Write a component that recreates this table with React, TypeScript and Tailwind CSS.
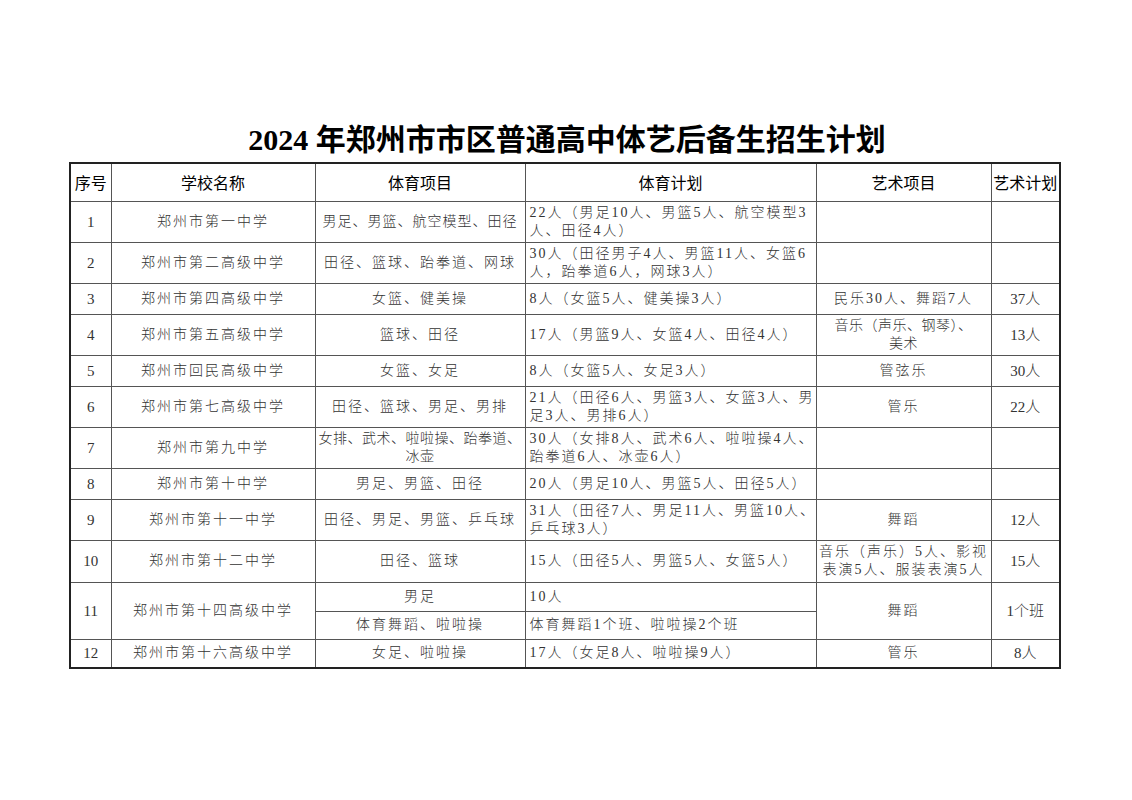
import type { ReactNode } from 'react'

type Row = {
  no: string
  school: string
  sport: ReactNode
  plan: ReactNode
  art?: ReactNode
  artPlan?: string
  h: string
  sportCls?: string
  artCls?: string
}

const rows: Row[] = [
  {
    no: '1',
    school: '郑州市第一中学',
    sport: '男足、男篮、航空模型、田径',
    sportCls: 'tracking-[1px]',
    plan: <>22人（男足10人、男篮5人、航空模型3<br />人、田径4人）</>,
    h: 'h-[41px]',
  },
  {
    no: '2',
    school: '郑州市第二高级中学',
    sport: '田径、篮球、跆拳道、网球',
    plan: <>30人（田径男子4人、男篮11人、女篮6<br />人，跆拳道6人，网球3人）</>,
    h: 'h-[41px]',
  },
  {
    no: '3',
    school: '郑州市第四高级中学',
    sport: '女篮、健美操',
    plan: '8人（女篮5人、健美操3人）',
    art: '民乐30人、舞蹈7人',
    artPlan: '37人',
    h: 'h-[31px]',
  },
  {
    no: '4',
    school: '郑州市第五高级中学',
    sport: '篮球、田径',
    plan: '17人（男篮9人、女篮4人、田径4人）',
    art: <>音乐（声乐、钢琴）、<br />美术</>,
    artCls: 'tracking-[0.5px]',
    artPlan: '13人',
    h: 'h-[41px]',
  },
  {
    no: '5',
    school: '郑州市回民高级中学',
    sport: '女篮、女足',
    plan: '8人（女篮5人、女足3人）',
    art: '管弦乐',
    artPlan: '30人',
    h: 'h-[31px]',
  },
  {
    no: '6',
    school: '郑州市第七高级中学',
    sport: '田径、篮球、男足、男排',
    plan: <>21人（田径6人、男篮3人、女篮3人、男<br />足3人、男排6人）</>,
    art: '管乐',
    artPlan: '22人',
    h: 'h-[41px]',
  },
  {
    no: '7',
    school: '郑州市第九中学',
    sport: <>女排、武术、啦啦操、跆拳道、<br />冰壶</>,
    sportCls: 'tracking-[0.5px]',
    plan: <>30人（女排8人、武术6人、啦啦操4人、<br />跆拳道6人、冰壶6人）</>,
    h: 'h-[41px]',
  },
  {
    no: '8',
    school: '郑州市第十中学',
    sport: '男足、男篮、田径',
    plan: '20人（男足10人、男篮5人、田径5人）',
    h: 'h-[31px]',
  },
  {
    no: '9',
    school: '郑州市第十一中学',
    sport: '田径、男足、男篮、乒乓球',
    plan: <>31人（田径7人、男足11人、男篮10人、<br />乒乓球3人）</>,
    art: '舞蹈',
    artPlan: '12人',
    h: 'h-[41px]',
  },
  {
    no: '10',
    school: '郑州市第十二中学',
    sport: '田径、篮球',
    plan: '15人（田径5人、男篮5人、女篮5人）',
    art: <>音乐（声乐）5人、影视<br />表演5人、服装表演5人</>,
    artPlan: '15人',
    h: 'h-[42px]',
  },
]

const td = 'border border-[#555] p-0 align-middle whitespace-nowrap'
const body = "font-['Liberation_Serif','Noto_Sans_CJK_SC',serif] font-light text-[14px] leading-[18px] text-[#333] tracking-[2px]"
const head = "font-['Noto_Sans_CJK_SC',sans-serif] text-[16px] text-black text-center"

export default function App() {
  return (
    <div className="w-[1132px] h-[800px] bg-white flex flex-col items-center pt-[125px]">
      <h1 className="h-[30px] leading-[30px] text-[30px] font-bold text-black mb-[7px] ml-[2px] font-['Liberation_Serif','Noto_Sans_CJK_SC',serif]">
        2024 年郑州市市区普通高中体艺后备生招生计划
      </h1>

      <table className="table-fixed border-collapse w-[990px] border-2 border-[#222] -ml-[2px]">
        <colgroup>
          <col className="w-[41px]" />
          <col className="w-[204px]" />
          <col className="w-[210px]" />
          <col className="w-[291px]" />
          <col className="w-[175px]" />
          <col className="w-[69px]" />
        </colgroup>
        <thead>
          <tr>
            <th className={`${td} ${head} h-[38px] font-normal`}>序号</th>
            <th className={`${td} ${head} font-normal`}>学校名称</th>
            <th className={`${td} ${head} font-normal`}>体育项目</th>
            <th className={`${td} ${head} font-normal`}>体育计划</th>
            <th className={`${td} ${head} font-normal`}>艺术项目</th>
            <th className={`${td} ${head} font-normal`}>艺术计划</th>
          </tr>
        </thead>
        <tbody className={body}>
          {rows.map((r) => (
            <tr key={r.no}>
              <td className={`${td} ${r.h} text-center tracking-normal text-[15px]`}>{r.no}</td>
              <td className={`${td} text-center`}>{r.school}</td>
              <td className={`${td} text-center ${r.sportCls ?? ''}`}>{r.sport}</td>
              <td className={`${td} text-left pl-[4px]`}>{r.plan}</td>
              <td className={`${td} text-center ${r.artCls ?? ''}`}>{r.art}</td>
              <td className={`${td} text-center tracking-normal text-[15px]`}>{r.artPlan}</td>
            </tr>
          ))}

          {/* row 11 has two sport lines */}
          <tr>
            <td rowSpan={2} className={`${td} text-center tracking-normal text-[15px]`}>11</td>
            <td rowSpan={2} className={`${td} text-center`}>郑州市第十四高级中学</td>
            <td className={`${td} h-[29px] text-center`}>男足</td>
            <td className={`${td} text-left pl-[4px]`}>10人</td>
            <td rowSpan={2} className={`${td} text-center`}>舞蹈</td>
            <td rowSpan={2} className={`${td} text-center tracking-normal text-[15px]`}>1个班</td>
          </tr>
          <tr>
            <td className={`${td} h-[28px] text-center`}>体育舞蹈、啦啦操</td>
            <td className={`${td} text-left pl-[4px]`}>体育舞蹈1个班、啦啦操2个班</td>
          </tr>

          <tr>
            <td className={`${td} h-[29px] text-center tracking-normal text-[15px]`}>12</td>
            <td className={`${td} text-center`}>郑州市第十六高级中学</td>
            <td className={`${td} text-center`}>女足、啦啦操</td>
            <td className={`${td} text-left pl-[4px]`}>17人（女足8人、啦啦操9人）</td>
            <td className={`${td} text-center`}>管乐</td>
            <td className={`${td} text-center tracking-normal text-[15px]`}>8人</td>
          </tr>
        </tbody>
      </table>
    </div>
  )
}
